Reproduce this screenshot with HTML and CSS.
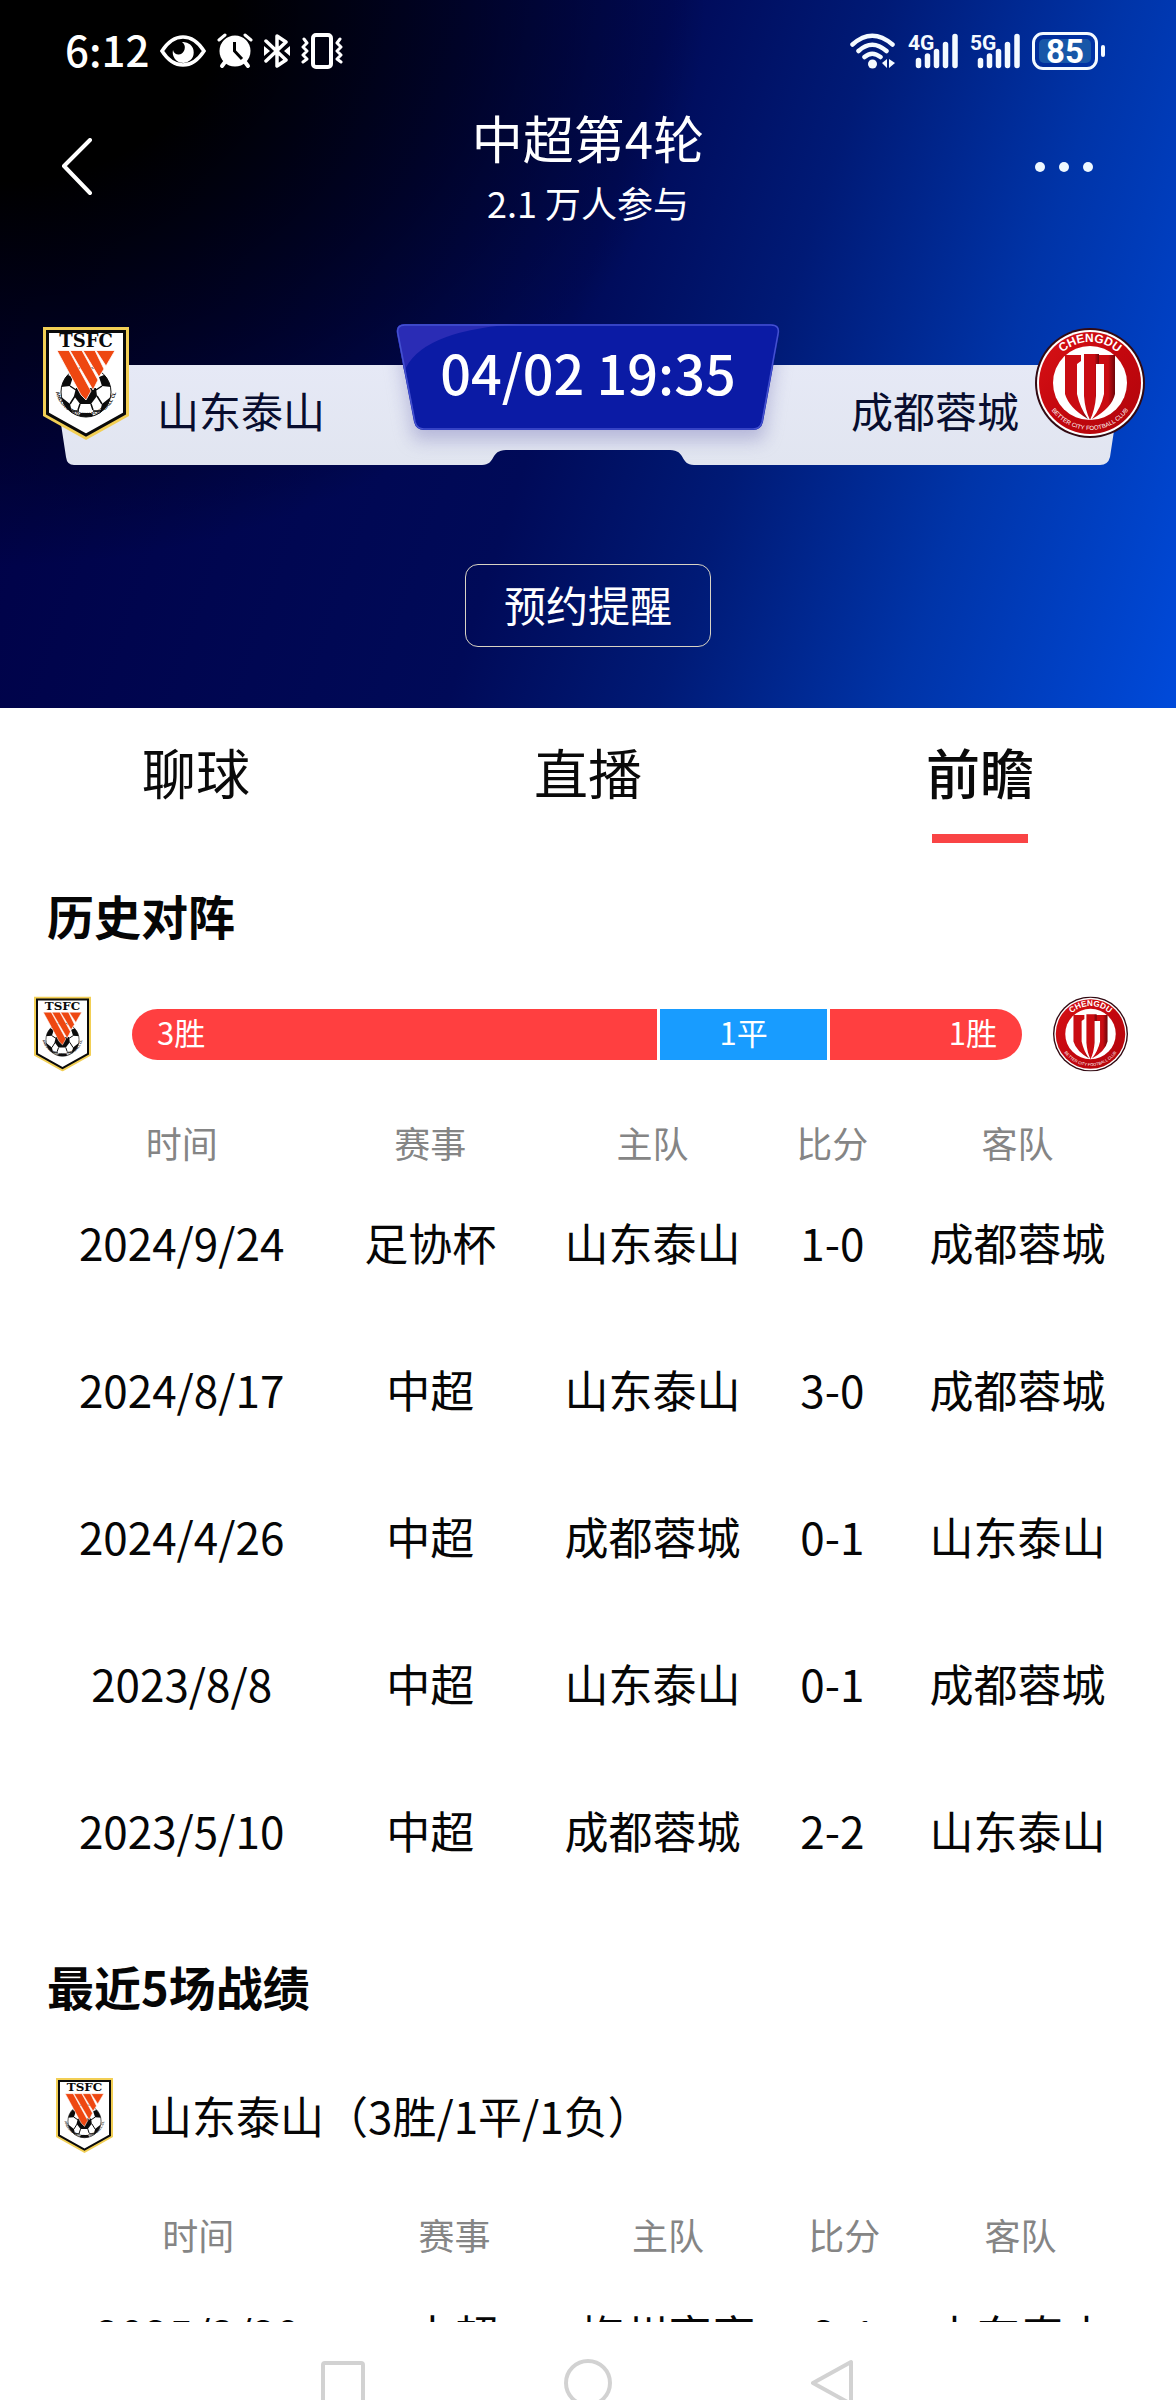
FILE: index.html
```
<!DOCTYPE html>
<html lang="zh-CN">
<head>
<meta charset="utf-8">
<meta name="viewport" content="width=device-width, initial-scale=1">
<title>中超第4轮</title>
<link rel="stylesheet" href="styles.css">
</head>
<body>
<svg class="defs" aria-hidden="true">
  <defs>
    <linearGradient id="red-ring" x1="0" y1="0" x2="1" y2="1">
      <stop offset="0" stop-color="#d81216"/><stop offset=".5" stop-color="#c4070e"/><stop offset="1" stop-color="#b0050b"/>
    </linearGradient>
    <linearGradient id="red-stem" x1="0" y1="0" x2="1" y2="0">
      <stop offset="0" stop-color="#c90c12"/><stop offset=".7" stop-color="#c90c12"/><stop offset="1" stop-color="#6d0509"/>
    </linearGradient>
    <path id="arc-top" d="M14 55 A41 41 0 0 1 96 55"/>
    <path id="arc-bottom" d="M8 55 A47 47 0 0 0 102 55"/>
    <path id="arc-shield" d="M13 66 A31 31 0 0 0 73 66"/>
    <clipPath id="ball-clip"><circle cx="43" cy="65" r="25"/></clipPath>
    <symbol id="tsfc" viewBox="0 0 86 113">
      <path d="M0 0H86V89L43 113L0 89Z" fill="#f2cf55"/>
      <path d="M4.500 4.500H81.500V86.500L43 108L4.500 86.500Z" fill="#fff" stroke="#0a0a0a" stroke-width="3"/>
      <text x="43" y="20" class="crest-name">TSFC</text>
      <circle cx="43" cy="65" r="25" fill="#fff" stroke="#111" stroke-width="1"/>
      <g clip-path="url(#ball-clip)" fill="#0b0b0b">
        <path d="M33 61H53L54 69L48 77H37L31 69Z"/>
        <path d="M17 60L20 46L30 50L27 59ZM69 60L66 46L56 50L59 59ZM17 69L27 77L29 85L24 90L15 82ZM69 69L59 77L57 85L62 90L71 82ZM36 40H50L43 47Z"/>
        <path d="M32 69L27 77M54 69L59 77M37 77L35 83M48 77L50 83M27 59L33 63M53 63L59 59M36 84L28 84M50 84L58 84" fill="none" stroke="#0b0b0b" stroke-width="1.500"/>
        <path d="M34 91L38 86H48L52 91Z"/>
      </g>
      <g fill="#ee4711" stroke="#fff" stroke-width=".8">
        <path d="M14 23.500H26L48 64L43 73L38 68Z"/>
        <path d="M27 23.500H39L55 53L50 63Z"/>
        <path d="M40 23.500H52L61 42L56 50Z"/>
        <path d="M53 23.500H72L63 39Z"/>
      </g>
      <text class="crest-micro"><textPath href="#arc-shield" startOffset="50%">SHANDONG TAISHAN FOOTBALL CLUB</textPath></text>
    </symbol>
    <symbol id="chengdu" viewBox="0 0 110 110">
      <circle cx="55" cy="55" r="55" fill="#320a12"/>
      <circle cx="55" cy="55" r="53" fill="#fff"/>
      <circle cx="55" cy="55" r="51" fill="url(#red-ring)"/>
      <circle cx="55" cy="55" r="37" fill="#fff"/>
      <g fill="url(#red-stem)">
        <path d="M30 27H46V33L42 36V66Q45 80 53 91Q34 80 30 66Z"/>
        <path d="M63 27H80V66Q77 80 57 91Q66 80 69 66V36H63Z"/>
        <path d="M49 26H64V36H61V68Q60 82 55 92Q50 82 49 68Z"/>
      </g>
      <text class="ring-name"><textPath href="#arc-top" startOffset="50%">CHENGDU</textPath></text>
      <text class="ring-micro"><textPath href="#arc-bottom" startOffset="50%">BETTER CITY FOOTBALL CLUB</textPath></text>
    </symbol>
    <symbol id="bars" viewBox="0 0 50 36">
      <path d="M10.500 27.500V32.500M19.500 23V32.500M28.500 18.500V32.500M37.500 11.500V32.500M47 3.500V32.500" stroke="#f4faff" stroke-width="5.500" stroke-linecap="round"/>
    </symbol>
  </defs>
</svg>

<div class="app">
  <header class="hero">
    <div class="status">
      <div class="status-left">
        <span class="clock">6:12</span>
        <svg width="46" height="32" viewBox="0 0 46 32" aria-label="护眼">
          <path d="M2 16Q11 2 23 2T44 16Q35 30 23 30T2 16Z" fill="none" stroke="#fff" stroke-width="3.500"/>
          <path d="M22 7A10.500 10.500 0 1 1 13 15A5.500 5.500 0 0 0 19 19.500A7 7 0 0 0 22 7Z" fill="#fff"/>
        </svg>
        <svg width="36" height="36" viewBox="0 0 36 36" aria-label="闹钟">
          <circle cx="18" cy="18" r="15.500" fill="#fff"/>
          <path d="M2 7L8 2M28 2L34 7" stroke="#fff" stroke-width="3" stroke-linecap="round"/>
          <path d="M8 29L5 33M28 29L31 33" stroke="#fff" stroke-width="4" stroke-linecap="round"/>
          <path d="M17.500 9V18L25 26" fill="none" stroke="#000" stroke-width="3"/>
        </svg>
        <svg width="26" height="36" viewBox="0 0 26 36" aria-label="蓝牙">
          <path d="M2 8L22 27L13 33V3L22 9L2 28" fill="none" stroke="#fff" stroke-width="3.500" stroke-linejoin="round" stroke-linecap="round"/>
          <path d="M0 13L6 18L0 23ZM26 13L20 18L26 23Z" fill="#fff"/>
        </svg>
        <svg width="42" height="36" viewBox="0 0 42 36" aria-label="振动">
          <rect x="12" y="2" width="18" height="32" rx="3" fill="none" stroke="#fff" stroke-width="4"/>
          <path d="M3 6L6 10L2 14L6 18L2 22L6 26L2 29M39 6L36 10L40 14L36 18L40 22L36 26L40 29" fill="none" stroke="#fff" stroke-width="3" stroke-linejoin="round" stroke-linecap="round"/>
        </svg>
      </div>
      <div class="status-right">
        <svg width="46" height="36" viewBox="0 0 46 36" aria-label="无线网络">
          <g fill="none" stroke="#f4faff" stroke-width="4.500" stroke-linecap="round">
            <path d="M2.500 11.500Q22 -6 42.500 11.500M8.500 18Q22 5.500 36.500 18M14.500 24Q22 17.500 30.500 24"/>
          </g>
          <circle cx="22.500" cy="31" r="4.500" fill="#f4faff"/>
          <path d="M37 26V35L32 30ZM39 35V26L45 30Z" fill="#f4faff"/>
        </svg>
        <svg class="signal" width="50" height="36" viewBox="0 0 50 36"><use href="#bars"/><text x="0" y="17" class="net">4G</text></svg>
        <svg class="signal" width="50" height="36" viewBox="0 0 50 36"><use href="#bars"/><text x="0" y="17" class="net">5G</text></svg>
        <span class="battery"><span class="battery-level">85</span></span>
      </div>
    </div>

    <div class="topbar">
      <button class="icon-btn" type="button" aria-label="返回">
        <svg width="32" height="58" viewBox="0 0 32 58"><path d="M29 2L3 28L29 55" fill="none" stroke="#fff" stroke-width="4" stroke-linecap="round" stroke-linejoin="round"/></svg>
      </button>
      <div class="heading">
        <h1>中超第4轮</h1>
        <p>2.1 万人参与</p>
      </div>
      <button class="icon-btn more" type="button" aria-label="更多">
        <svg width="58" height="10" viewBox="0 0 58 10"><g fill="#eef8ff"><circle cx="5" cy="5" r="5"/><circle cx="29" cy="5" r="5"/><circle cx="53" cy="5" r="5"/></g></svg>
      </button>
    </div>

    <section class="matchup">
      <svg class="plate" viewBox="0 0 1176 150" preserveAspectRatio="none" aria-hidden="true">
        <defs>
          <linearGradient id="plate-fill" x1="0" y1="0" x2="0" y2="1"><stop offset="0" stop-color="#e6e9f6"/><stop offset="1" stop-color="#e1e5f0"/></linearGradient>
          <filter id="soft" x="-20%" y="-20%" width="140%" height="160%"><feGaussianBlur stdDeviation="9"/></filter>
          <clipPath id="badge-clip"><path d="M405 0H771Q781 0 779 10L763 98Q761 106 753 106H424Q416 106 414 98L397 10Q395 0 405 0Z"/></clipPath>
          <clipPath id="plate-clip"><path d="M52 41H1124L1110 133Q1108 141 1100 141H694C680 141 686 126 670 126H506C490 126 496 141 482 141H74Q67 141 66 133Z"/></clipPath>
        </defs>
        <path d="M52 41H1124L1110 133Q1108 141 1100 141H694C680 141 686 126 670 126H506C490 126 496 141 482 141H74Q67 141 66 133Z" fill="url(#plate-fill)"/>
        <g clip-path="url(#plate-clip)"><path d="M397 10H779L763 116H414Z" fill="#8f8fc4" opacity=".55" filter="url(#soft)"/></g>
        <g clip-path="url(#badge-clip)">
          <path d="M390 0H790V110H390Z" fill="#0b1ba5"/>
          <path d="M390 0H520Q420 6 404 48L390 60Z" fill="#2a2cb5"/>
        </g>
        <path d="M405 1H771Q780 1 778 10L762 98Q760 105 753 105H424Q417 105 415 98L398 10Q396 1 405 1Z" fill="none" stroke="#4451cf" stroke-width="1.500"/>
      </svg>
      <svg class="crest-home" viewBox="0 0 86 113" role="img" aria-label="山东泰山"><use href="#tsfc"/></svg>
      <span class="team">山东泰山</span>
      <time class="kickoff">04/02 19:35</time>
      <span class="team team-away">成都蓉城</span>
      <svg class="crest-away" viewBox="0 0 110 110" role="img" aria-label="成都蓉城"><use href="#chengdu"/></svg>
    </section>

    <button class="remind" type="button">预约提醒</button>
  </header>

  <nav class="tabs">
    <a href="#chat">聊球</a>
    <a href="#live">直播</a>
    <a href="#preview" class="active" aria-current="page">前瞻</a>
  </nav>

  <main class="content" id="preview">
    <h2>历史对阵</h2>
    <div class="record">
      <svg class="record-home" viewBox="0 0 86 113" aria-hidden="true"><use href="#tsfc"/></svg>
      <div class="record-bar">
        <span class="win">3胜</span>
        <span class="draw">1平</span>
        <span class="loss">1胜</span>
      </div>
      <svg class="record-away" viewBox="0 0 110 110" aria-hidden="true"><use href="#chengdu"/></svg>
    </div>
    <table class="games history">
      <colgroup><col class="c-date"><col class="c-cup"><col class="c-home"><col class="c-score"><col class="c-away"></colgroup>
      <thead><tr><th>时间</th><th>赛事</th><th>主队</th><th>比分</th><th>客队</th></tr></thead>
      <tbody>
        <tr><td>2024/9/24</td><td>足协杯</td><td>山东泰山</td><td>1-0</td><td>成都蓉城</td></tr>
        <tr><td>2024/8/17</td><td>中超</td><td>山东泰山</td><td>3-0</td><td>成都蓉城</td></tr>
        <tr><td>2024/4/26</td><td>中超</td><td>成都蓉城</td><td>0-1</td><td>山东泰山</td></tr>
        <tr><td>2023/8/8</td><td>中超</td><td>山东泰山</td><td>0-1</td><td>成都蓉城</td></tr>
        <tr><td>2023/5/10</td><td>中超</td><td>成都蓉城</td><td>2-2</td><td>山东泰山</td></tr>
      </tbody>
    </table>

    <h2 class="recent-title">最近5场战绩</h2>
    <div class="recent-team">
      <svg class="recent-crest" viewBox="0 0 86 113" aria-hidden="true"><use href="#tsfc"/></svg>
      <span>山东泰山（3胜/1平/1负）</span>
    </div>
    <table class="games recent">
      <colgroup><col class="c-date"><col class="c-cup"><col class="c-home"><col class="c-score"><col class="c-away"></colgroup>
      <thead><tr><th>时间</th><th>赛事</th><th>主队</th><th>比分</th><th>客队</th></tr></thead>
      <tbody>
        <tr><td>2025/3/29</td><td>中超</td><td>梅州客家</td><td>2-1</td><td>山东泰山</td></tr>
      </tbody>
    </table>
  </main>

  <div class="sysnav">
    <button type="button" aria-label="最近任务"><svg width="48" height="50" viewBox="0 0 48 50"><rect x="4" y="5" width="40" height="40" rx="2"/></svg></button>
    <button type="button" aria-label="主屏幕"><svg width="48" height="50" viewBox="0 0 48 50"><circle cx="24" cy="25" r="22"/></svg></button>
    <button type="button" aria-label="返回上级"><svg width="48" height="50" viewBox="0 0 48 50"><path d="M42 4V46L4 25Z"/></svg></button>
  </div>
</div>
</body>
</html>
```
FILE: styles.css
```
* { box-sizing: border-box; }

body {
  margin: 0;
  background: #fff;
  color: #060606;
  font-family: "Noto Sans CJK SC", "Noto Sans", sans-serif;
}

h1, h2, p { margin: 0; }
svg { display: block; flex: none; }
button { padding: 0; border: 0; background: none; color: inherit; font: inherit; cursor: pointer; }
.defs { position: absolute; width: 0; height: 0; }

.app {
  display: flex;
  flex-direction: column;
  height: 100vh;
  overflow: hidden;
}

/* Header */
.hero {
  flex: none;
  display: flex;
  flex-direction: column;
  padding-bottom: 61px;
  color: #fff;
  background:
    radial-gradient(ellipse 60% 80% at 0 0, #000 0, #000 32%, rgba(0, 0, 10, .6) 65%, transparent 100%),
    linear-gradient(108deg, #000044 0, #000a58 48%, #001a76 63%, #0034a8 80%, #004ada 100%);
}

.status {
  display: flex;
  justify-content: space-between;
  align-items: center;
  height: 101px;
  padding: 0 71px 0 65px;
}
.status-left, .status-right { display: flex; align-items: center; gap: 12px; }
.status-left { gap: 11px; }
.clock { font-size: 42px; line-height: 60px; font-weight: 500; padding-bottom: 4px; }
.signal { overflow: visible; }
.net { font: 700 21px Roboto, sans-serif; fill: #f4faff; }
.battery {
  position: relative;
  width: 66px;
  height: 38px;
  padding: 4px;
  border: 3px solid #f4faff;
  border-radius: 11px;
  margin-right: 7px;
}
.battery::after {
  content: "";
  position: absolute;
  right: -10px;
  top: 10px;
  width: 4px;
  height: 12px;
  border-radius: 2px;
  background: #f4faff;
}
.battery-level {
  display: block;
  background: #1857a8;
  border-radius: 5px;
  height: 24px;
  font: 700 33px/26px Roboto, sans-serif;
  text-align: center;
}

.topbar {
  display: grid;
  grid-template-columns: 1fr auto 1fr;
  align-items: center;
  padding: 0 83px 0 61px;
}
.icon-btn { width: 58px; display: flex; }
.more { justify-self: end; }
.heading { text-align: center; padding-left: 22px; }
.heading h1 { font-size: 51px; line-height: 72px; font-weight: 400; }
.heading p { font-size: 36px; line-height: 59px; }

/* Fixture plate */
.matchup {
  position: relative;
  display: grid;
  grid-template-columns: 110px 1fr 382px 1fr 110px;
  align-items: start;
  height: 150px;
  margin-top: 92px;
  padding: 0 31px;
}
.plate { position: absolute; left: 0; top: 0; width: 100%; height: 150px; }
.matchup > :not(.plate) { position: relative; }
.crest-home { width: 86px; height: 113px; margin: 3px 0 0 12px; }
.crest-away { width: 110px; height: 110px; margin-top: 4px; }
.team {
  padding: 56px 16px 0;
  font-size: 42px;
  line-height: 60px;
  color: #080d2e;
}
.team-away { text-align: right; }
.kickoff {
  font-size: 54px;
  line-height: 72px;
  font-weight: 500;
  text-align: center;
  padding-top: 12px;
}

.remind {
  align-self: center;
  width: 246px;
  height: 83px;
  margin-top: 90px;
  padding-bottom: 4px;
  border: 1px solid #d8d3c4;
  border-radius: 13px;
  font-size: 42px;
}

/* Tabs */
.tabs {
  flex: none;
  display: grid;
  grid-template-columns: repeat(3, 1fr);
  height: 135px;
}
.tabs a {
  display: flex;
  flex-direction: column;
  align-items: center;
  justify-content: space-between;
  padding-top: 26px;
  font-size: 54px;
  line-height: 76px;
  color: #0a0a0a;
  text-decoration: none;
}
.tabs .active { font-weight: 500; }
.tabs .active::after { content: ""; width: 96px; height: 9px; background: #f94445; }

/* Content */
.content { flex: 1; min-height: 0; overflow: hidden; }
h2 { padding: 37px 47px 0; font-size: 47px; line-height: 70px; font-weight: 700; }

.record {
  display: flex;
  align-items: center;
  margin-top: 46px;
  padding: 0 48px 0 34px;
}
.record-home { width: 57px; height: 76px; }
.record-away { width: 75px; height: 76px; }
.record-bar {
  flex: 1;
  display: grid;
  grid-template-columns: 526fr 168fr 192fr;
  gap: 3px;
  height: 51px;
  margin: 0 31px 0 41px;
  border-radius: 26px;
  overflow: hidden;
  color: #fff;
  font-size: 31px;
  line-height: 46px;
}
.win, .loss { background: #ff3f40; padding: 0 25px; }
.draw { background: #189cff; text-align: center; }
.loss { text-align: right; }

.games { border-collapse: collapse; table-layout: fixed; text-align: center; }
.games th { height: 51px; padding: 0; font-size: 36px; line-height: 51px; font-weight: 400; color: #858585; }
.games td { height: 147px; padding: 0; font-size: 44px; line-height: 60px; white-space: nowrap; }

.history { width: calc(100% - 118px); margin: 45px 58px 0 60px; }
.history .c-date { width: 23%; }
.history .c-cup { width: 24%; }
.history .c-home { width: 18%; }
.history .c-score { width: 16%; }
.history .c-away { width: 19%; }

.recent-title { padding-top: 48px; }
.recent-team {
  display: flex;
  align-items: center;
  gap: 35px;
  margin-top: 56px;
  padding: 0 56px;
  font-size: 44px;
  line-height: 60px;
}
.recent-team span { padding-bottom: 2px; }
.recent-crest { width: 57px; height: 77px; }
.recent { width: calc(100% - 108px); margin: 55px 54px 0; }
.recent .c-date { width: 27%; }
.recent .c-cup { width: 21%; }
.recent .c-home { width: 19%; }
.recent .c-score { width: 14%; }
.recent .c-away { width: 19%; }

/* System navigation */
.sysnav {
  flex: none;
  display: grid;
  grid-template-columns: repeat(3, 1fr);
  justify-items: center;
  align-items: start;
  height: 78px;
  padding: 36px 220px 0;
  overflow: hidden;
  background: #fff;
}
.sysnav svg { fill: none; stroke: #d2d2d2; stroke-width: 4; stroke-linejoin: round; }

/* Crest lettering */
.crest-name { font: 700 18px "DejaVu Serif", serif; text-anchor: middle; fill: #0a0a0a; }
.crest-micro { font: 700 5px "Liberation Sans", sans-serif; text-anchor: middle; fill: #111; }
.ring-name { font: 700 12px "Liberation Sans", sans-serif; text-anchor: middle; fill: #fff; }
.ring-micro { font: 400 6px "Liberation Sans", sans-serif; text-anchor: middle; fill: #fff; }
```
